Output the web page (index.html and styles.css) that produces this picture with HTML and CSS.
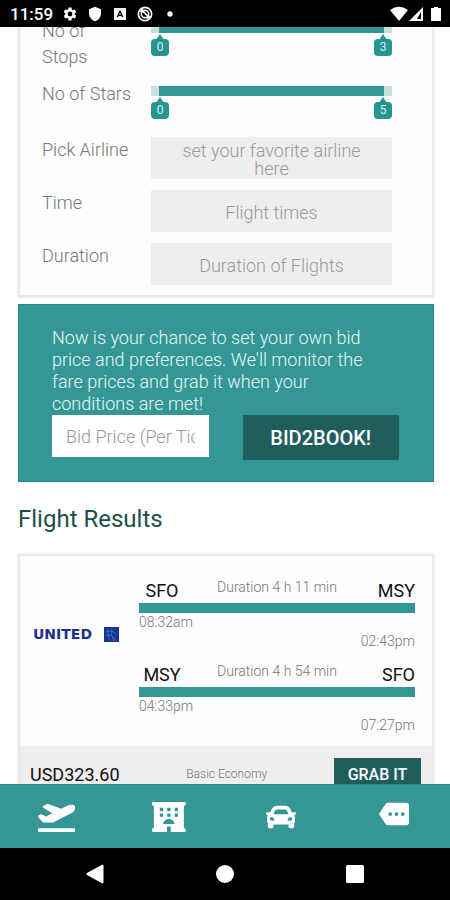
FILE: index.html
```html
<!DOCTYPE html>
<html lang="en">
<head>
<meta charset="utf-8">
<meta name="viewport" content="width=device-width, initial-scale=1">
<title>Flight Results</title>
<link rel="stylesheet" href="styles.css">
</head>
<body>
<header class="status">
  <span class="status-time">11:59</span>
  <svg class="status-icon" viewBox="0 0 24 24"><path fill-rule="evenodd" d="M19.14 12.94c.04-.3.06-.61.06-.94 0-.32-.02-.64-.07-.94l2.03-1.58a.49.49 0 0 0 .12-.61l-1.92-3.32a.49.49 0 0 0-.59-.22l-2.39.96c-.5-.38-1.03-.7-1.62-.94l-.36-2.54a.48.48 0 0 0-.48-.41h-3.84c-.24 0-.43.17-.47.41l-.36 2.54c-.59.24-1.13.57-1.62.94l-2.39-.96a.48.48 0 0 0-.59.22L2.74 8.87c-.12.21-.08.47.12.61l2.03 1.58c-.05.3-.09.63-.09.94s.02.64.07.94l-2.03 1.58a.49.49 0 0 0-.12.61l1.92 3.32c.12.22.37.29.59.22l2.39-.96c.5.38 1.03.7 1.62.94l.36 2.54c.05.24.24.41.48.41h3.84c.24 0 .44-.17.47-.41l.36-2.54c.59-.24 1.13-.56 1.62-.94l2.39.96c.22.08.47 0 .59-.22l1.92-3.32a.49.49 0 0 0-.12-.61zM12 15.6a3.6 3.6 0 1 1 0-7.2 3.6 3.6 0 0 1 0 7.2z"/></svg>
  <svg class="status-icon" viewBox="0 0 24 24"><path d="M12 1 3 5v6c0 5.55 3.84 10.74 9 12 5.16-1.26 9-6.45 9-12V5z"/></svg>
  <svg class="status-icon" viewBox="0 0 24 24"><path fill-rule="evenodd" d="M3 3h18v18H3zM11 7 7 17h2l1-2h4l1 2h2L13 7zm1 3 1.200 3h-2.400z"/></svg>
  <svg class="status-icon" viewBox="0 0 24 24"><g fill="none" stroke="#fff" stroke-width="2.400"><circle cx="12" cy="12" r="10"/><circle cx="12" cy="12" r="5.500"/><path d="m6 5 13 13M5 9l4-4M15 19l4-4"/></g></svg>
  <svg class="status-icon" viewBox="0 0 24 24"><circle cx="12" cy="12" r="4"/></svg>
  <span class="status-space"></span>
  <svg class="status-signal" viewBox="0 0 52 16"><path d="M0 4Q9-2.500 18 4L9 15z"/><path fill-rule="evenodd" d="M33 1v14H19zM31 6v7h-4z"/><path d="M44 1h4v1h3v13H41V2h3z"/></svg>
</header>

<main class="page">
  <section class="card filters">
    <div class="row">
      <span class="label" id="stops">No of<br>Stops</span>
      <div class="range" role="group" aria-labelledby="stops">
        <input type="range" aria-label="Fewest stops" min="0" max="3" value="0">
        <input type="range" aria-label="Most stops" min="0" max="3" value="3">
        <output class="tag tag-low">0</output>
        <output class="tag tag-high">3</output>
      </div>
    </div>
    <div class="row">
      <span class="label" id="stars">No of Stars</span>
      <div class="range" role="group" aria-labelledby="stars">
        <input type="range" aria-label="Fewest stars" min="0" max="5" value="0">
        <input type="range" aria-label="Most stars" min="0" max="5" value="5">
        <output class="tag tag-low">0</output>
        <output class="tag tag-high">5</output>
      </div>
    </div>
    <div class="row">
      <label class="label" for="airline">Pick Airline</label>
      <button class="field" id="airline" type="button">set your favorite airline here</button>
    </div>
    <div class="row">
      <label class="label" for="time">Time</label>
      <button class="field" id="time" type="button">Flight times</button>
    </div>
    <div class="row">
      <label class="label" for="duration">Duration</label>
      <button class="field" id="duration" type="button">Duration of Flights</button>
    </div>
  </section>

  <form class="bid">
    <p class="bid-text">Now is your chance to set your own bid price and preferences. We'll monitor the fare prices and grab it when your conditions are met!</p>
    <div class="bid-controls">
      <input class="bid-price" type="text" aria-label="Bid price per ticket" placeholder="Bid Price (Per Ticket)">
      <button class="bid-button" type="button">BID2BOOK!</button>
    </div>
  </form>

  <h1 class="heading">Flight Results</h1>

  <article class="card result">
    <div class="result-body">
      <div class="airline"><span>UNITED</span>
        <svg class="airline-mark" viewBox="0 0 15 15"><path fill="#12359a" d="M0 0h15v15H0z"/><path fill="none" stroke="#5f82c4" stroke-width=".6" d="M2 5Q8 2 13 8M2 9Q7 5 12 14M4 2Q3 8 6 14M8 2Q6 8 10 14"/></svg>
      </div>
      <div class="legs">
        <section class="leg">
          <div class="leg-head"><span class="from">SFO</span><span class="length">Duration 4 h 11 min</span><span class="to">MSY</span></div>
          <div class="bar"></div>
          <div class="depart">08:32am</div>
          <div class="arrive">02:43pm</div>
        </section>
        <section class="leg">
          <div class="leg-head"><span class="from">MSY</span><span class="length">Duration 4 h 54 min</span><span class="to">SFO</span></div>
          <div class="bar"></div>
          <div class="depart">04:33pm</div>
          <div class="arrive">07:27pm</div>
        </section>
      </div>
    </div>
    <footer class="result-foot">
      <span class="price">USD323.60</span>
      <span class="fare">Basic Economy</span>
      <button class="grab" type="button">GRAB IT</button>
    </footer>
  </article>
</main>

<nav class="tabs">
  <a href="#flights" aria-label="Flights"><svg viewBox="0 0 640 512"><path d="M624 448H16c-8.840 0-16 7.160-16 16v32c0 8.840 7.160 16 16 16h608c8.840 0 16-7.160 16-16v-32c0-8.840-7.160-16-16-16zM80.550 341.270c6.280 6.840 15.100 10.720 24.330 10.710l130.540-.18a65.620 65.620 0 0 0 29.640-7.120l290.960-147.650c26.740-13.570 50.710-32.940 67.020-58.310 18.310-28.480 20.300-49.090 13.070-63.650-7.210-14.570-24.740-25.270-58.250-27.450-29.850-1.940-59.540 5.920-86.280 19.480l-98.510 49.990-218.700-82.060a17.800 17.800 0 0 0-18-1.110L90.620 67.290c-10.670 5.410-13.250 19.650-5.170 28.530l156.220 98.100-103.210 52.370-72.350-36.470a17.800 17.800 0 0 0-16.070.02L9.910 230.220c-10.440 5.300-13.190 19.120-5.570 28.080l76.210 82.970z"/></svg></a>
  <a href="#hotels" aria-label="Hotels"><svg viewBox="0 0 576 512"><path fill-rule="evenodd" d="M560 64c8.840 0 16-7.160 16-16V16c0-8.840-7.160-16-16-16H16C7.160 0 0 7.160 0 16v32c0 8.840 7.160 16 16 16h16v384H16c-8.840 0-16 7.160-16 16v32c0 8.840 7.160 16 16 16h240v-80c0-8.800 7.200-16 16-16h32c8.800 0 16 7.200 16 16v80h240c8.840 0 16-7.160 16-16v-32c0-8.840-7.160-16-16-16h-16V64zM133 100h56v56h-56zm127 0h56v56h-56zm127 0h56v56h-56zM133 196h56v56h-56zm127 0h56v56h-56zm127 0h56v56h-56zM192 376c0-49 43-88 96-88s96 39 96 88z"/></svg></a>
  <a href="#cars" aria-label="Cars"><svg viewBox="0 0 512 512"><path d="M499.990 176h-59.870l-16.640-41.600C406.380 91.630 365.570 64 319.500 64h-127c-46.060 0-86.880 27.630-103.990 70.400L71.870 176H12.010C4.200 176-1.530 183.340.37 190.910l6 24C7.700 220.250 12.500 224 18.010 224h20.070C24.650 235.730 16 252.780 16 272v48c0 16.120 6.160 30.670 16 41.930V416c0 17.670 14.330 32 32 32h32c17.670 0 32-14.330 32-32v-32h256v32c0 17.670 14.330 32 32 32h32c17.670 0 32-14.330 32-32v-54.070c9.840-11.250 16-25.800 16-41.930v-48c0-19.220-8.650-36.270-22.070-48H494c5.510 0 10.310-3.750 11.640-9.090l6-24c1.890-7.570-3.840-14.910-11.650-14.910zm-352.060-17.830c7.290-18.220 24.940-30.170 44.570-30.170h127c19.630 0 37.280 11.950 44.570 30.170L384 208H128l19.930-49.830zM96 319.800c-19.200 0-32-12.760-32-31.900S76.800 256 96 256s48 28.710 48 47.850-28.800 15.950-48 15.950zm320 0c-19.200 0-48 3.190-48-15.950S396.800 256 416 256s32 12.760 32 31.900-12.800 31.900-32 31.900z"/></svg></a>
  <a href="#more" aria-label="More"><svg viewBox="0 2.400 24 24"><path fill-rule="evenodd" d="M22 3H7c-.69 0-1.230.35-1.590.88L0 12l5.410 8.110c.36.53.9.89 1.590.89h15c1.100 0 2-.9 2-2V5c0-1.100-.9-2-2-2zM9 10.500a1.500 1.500 0 1 1 0 3 1.500 1.500 0 0 1 0-3zm5 0a1.500 1.500 0 1 1 0 3 1.500 1.500 0 0 1 0-3zm5 0a1.500 1.500 0 1 1 0 3 1.500 1.500 0 0 1 0-3z"/></svg></a>
</nav>

<nav class="system">
  <button type="button" aria-label="Back"><svg viewBox="0 0 18 20"><path d="M1 9 16 .8q1.500-.6 1.500 1v16.400q0 1.600-1.500 1L1 11q-1.500-1 0-2z"/></svg></button>
  <button type="button" aria-label="Home"><svg viewBox="0 0 18 20"><circle cx="9" cy="10" r="9"/></svg></button>
  <button type="button" aria-label="Overview"><svg viewBox="0 0 18 20"><rect y="1" width="18" height="18" rx="1.500"/></svg></button>
</nav>
</body>
</html>
```
FILE: styles.css
```css
* {
  box-sizing: border-box;
}

body {
  margin: 0;
  height: 100vh;
  display: flex;
  flex-direction: column;
  overflow: hidden;
  background: #fff;
  font-family: Roboto, "Liberation Sans", sans-serif;
  font-size: 18px;
  font-weight: 300;
  color: #777;
}

button,
input {
  font: inherit;
  border: 0;
  border-radius: 0;
}

svg {
  display: block;
  fill: #fff;
}

/* Status bar */
.status {
  flex: none;
  position: relative;
  z-index: 1;
  display: flex;
  align-items: center;
  gap: 9px;
  height: 27px;
  padding: 0 8px 0 10px;
  background: #000;
  color: #fff;
}

.status-time {
  font-size: 17px;
  font-weight: 500;
}

.status-icon {
  width: 16px;
  height: 16px;
}

.status-space {
  flex: 1;
}

.status-signal {
  width: 52px;
  height: 16px;
}

/* Page, shown part-way down its scroll */
.page {
  flex: 1;
  min-height: 0;
  overflow: hidden;
  padding: 0 16px 0 18px;
}

.card {
  background: #fdfdfd;
  border: 2px solid #e9e9e9;
  box-shadow: 0 0 3px #e4e4e4;
}

/* Filters */
.filters {
  display: grid;
  gap: 11px;
  margin-top: -23px;
  padding: 12px 40px 10px 22px;
}

.row {
  display: flex;
  align-items: flex-start;
}

.label {
  flex: none;
  width: 109px;
  line-height: 26px;
}

.range {
  position: relative;
  flex: 1;
  height: 45px;
}

.range::before {
  content: "";
  display: block;
  height: 10px;
  margin-top: 5px;
  background: #349796;
  border: solid #c5e1de;
  border-width: 0 8px;
}

.range input {
  appearance: none;
  position: absolute;
  left: 0;
  bottom: 7px;
  width: 100%;
  height: 17px;
  margin: 0;
  background: none;
  pointer-events: none;
}

.range input::-webkit-slider-thumb {
  appearance: none;
  width: 18px;
  height: 17px;
  border-radius: 4px;
  background: #259590;
  pointer-events: auto;
}

.tag {
  position: absolute;
  bottom: 7px;
  width: 18px;
  font-size: 12px;
  font-weight: 400;
  line-height: 17px;
  text-align: center;
  color: #d9f0ee;
  pointer-events: none;
}

.tag::before {
  content: "";
  position: absolute;
  bottom: 16px;
  left: 5px;
  border: solid transparent;
  border-width: 0 4px 6px;
  border-bottom-color: #259590;
}

.tag-low {
  left: 0;
}

.tag-high {
  right: 0;
}

.field {
  flex: 1;
  height: 42px;
  padding: 3px 16px 0;
  background: #eee;
  color: #999;
  line-height: 18px;
}

/* Bid panel */
.bid {
  margin-top: 7px;
  padding: 22px 34px 21px 33px;
  background: #349796;
  border: 1px solid #1c8f89;
}

.bid-text {
  margin: 0;
  padding-right: 20px;
  line-height: 22px;
  color: #e8f7f5;
}

.bid-controls {
  display: grid;
  grid-template-columns: 1fr 1fr;
  align-items: start;
  gap: 34px;
}

.bid-price {
  width: 100%;
  min-width: 0;
  height: 42px;
  padding: 0 14px;
  background: #fff;
}

.bid-price::placeholder {
  color: #999;
}

.bid-button,
.grab {
  background: #205e5d;
  color: #fff;
  font-weight: 500;
}

.bid-button {
  height: 45px;
  font-size: 20px;
}

/* Results */
.heading {
  margin: 24px 0 22px;
  font-size: 24px;
  line-height: 26px;
  font-weight: 400;
  color: #1c4f49;
}

.result-body {
  display: flex;
  align-items: flex-start;
  gap: 20px;
  padding: 24px 17px 11px 13px;
}

.airline {
  flex: none;
  width: 86px;
  display: flex;
  align-items: center;
  justify-content: space-between;
  margin-top: 46px;
  font-family: "DejaVu Sans", sans-serif;
  font-size: 14px;
  font-weight: 700;
  color: #1b2f91;
}

.airline-mark {
  width: 15px;
  height: 15px;
}

.legs {
  flex: 1;
  display: grid;
  gap: 13px;
}

.leg {
  font-size: 14px;
}

.leg-head {
  display: grid;
  grid-template-columns: 46px 1fr 46px;
  height: 23px;
  line-height: 14px;
  text-align: center;
}

.from,
.to {
  font-size: 18px;
  line-height: 22px;
  font-weight: 400;
  color: #111;
}

.to,
.arrive {
  text-align: right;
}

.bar {
  height: 10px;
  background: #349796;
}

.depart,
.arrive {
  line-height: 19px;
}

.result-foot {
  display: flex;
  align-items: center;
  justify-content: space-between;
  height: 56px;
  padding: 0 11px 0 10px;
  background: #eee;
}

.price {
  font-weight: 400;
  color: #111;
}

.fare {
  font-size: 12px;
}

.grab {
  width: 87px;
  height: 32px;
  padding: 0;
  font-size: 16px;
}

/* Bottom bars */
.tabs {
  flex: none;
  display: grid;
  grid-template-columns: repeat(4, 1fr);
  height: 64px;
  background: #349796;
  border-top: 1px solid #1c8f89;
}

.tabs a {
  display: flex;
  align-items: center;
  justify-content: center;
}

.tabs svg {
  height: 30px;
}

.system {
  flex: none;
  display: grid;
  grid-template-columns: repeat(3, 1fr);
  height: 52px;
  padding: 0 30px;
  background: #000;
}

.system button {
  display: flex;
  align-items: center;
  justify-content: center;
  background: none;
}

.system svg {
  width: 18px;
  height: 20px;
}
```
